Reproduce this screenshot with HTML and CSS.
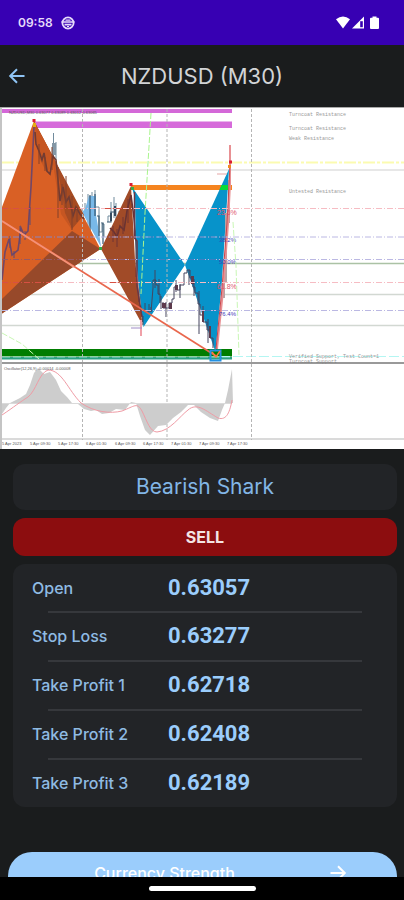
FILE: index.html
```
<!DOCTYPE html>
<html lang="en">
<head>
  <meta charset="UTF-8">
  <meta name="viewport" content="width=device-width, initial-scale=1.0">
  <title>NZDUSD (M30)</title>
  <link rel="stylesheet" href="styles.css">
</head>
<body>
  <div class="status-bar">
    <span class="time">09:58</span>
    <svg class="app-icon" viewBox="0 0 14 14">
      <circle cx="7" cy="7" r="5.6" fill="none" stroke="#e6dcfa" stroke-width="1.8"/>
      <path d="M0.5 6h13M3.5 8.6h7" stroke="#e6dcfa" stroke-width="1.6"/>
      <path d="M4.5 4.2h5M6 10.5h2" stroke="#e6dcfa" stroke-width="1.2"/>
    </svg>
    <svg class="system-icons" viewBox="0 0 44 14">
      <path d="M0 3.2Q7-2.4 14 3.2L7 12.5Z" fill="#fff"/>
      <path d="M28 0.5V12.5H16Z" fill="#fff"/>
      <path d="M24.2 5.2h2.6v6h-2.6Z" fill="#3700b3"/>
      <path d="M36.500 0.500h4v1.300h1.500q1 0 1 1V12q0 1-1 1h-7q-1 0-1-1V2.800q0-1 1-1h1.500Z" fill="#fff"/>
    </svg>
  </div>

  <header class="app-bar">
    <button class="back" aria-label="Back">
      <svg viewBox="0 0 18 18"><path d="M16.500 9H2.500M9 2.200L2.200 9L9 15.800"/></svg>
    </button>
    <h1>NZDUSD (M30)</h1>
  </header>

  <main>
    <svg class="chart" viewBox="0 107 404 342">
      <rect y="107" width="404" height="342" fill="#fff"/>

      <!-- resistance zones -->
      <rect x="2" y="109" width="230" height="4" fill="#d468d8"/>
      <rect x="34" y="121.500" width="198" height="6.500" fill="#d66ada"/>
      <rect x="131" y="185" width="101" height="5" fill="#f5841f"/>
      <text class="tiny dark" x="9" y="113.500">NZDUSD,M30 0.63077 0.63089 0.63012 0.63065</text>

      <!-- price levels -->
      <path d="M2 170H404" stroke="#cfcfcf"/>
      <path d="M2 263.500H404" stroke="#abc2a5" stroke-width="1.300"/>
      <path d="M2 294.500H404M2 325.500H404" stroke="#d2d8d2" stroke-width="1.500"/>
      <path d="M2 162.500H404" stroke="#fbfbb0" stroke-width="2" stroke-dasharray="12 2 3 2"/>

      <!-- supports -->
      <rect x="2" y="349" width="230" height="7.500" fill="#007d00"/>
      <rect x="2" y="357" width="230" height="2.500" fill="#2ba183"/>
      <path d="M2 357H232" stroke="#b6eee0" stroke-width="0.700" stroke-dasharray="8 3"/>
      <path d="M220 356.500H404" stroke="#b4f6f2" stroke-width="1.200" stroke-dasharray="10 3"/>

      <!-- candles behind the patterns -->
      <g fill="none" stroke="#718b9d" stroke-width="1">
        <path d="M53.500 133V170M56 142V160M82 208V222M85 203V215M88 194V236M92 192V206M95 190V230M96 207H99V232H102V224H104V237M108 222V216H111V202M114 197V218M116 203V220M119 211V225"/>
      </g>
      <path d="M82 212L85 209L89 196H96V215L99 232L101 247Z" fill="#78b8e8"/>
      <path d="M90 195V234M95 194V216M97 216H99V236M101 223H103V244M107 222H111V212H115" fill="none" stroke="#35566f" stroke-width="1.200"/>
      <path d="M110 213h2v8h-2ZM114 206h2v10h-2Z" fill="#354b60"/>
      <path d="M52 143h4v12h-4Z" fill="#8397a6"/>

      <!-- left pattern -->
      <path d="M34 121L100.500 249L2 313.500V207Z" fill="#d96025"/>
      <path d="M34 121L84 215L72 229L62 208L54 160L42 160Z" fill="#a64b22"/>
      <path d="M34 121L57 164L65 213L70 224L72 230L61 214L53 164L47 173L39 158Z" fill="#c65622"/>
      <path d="M72 231L100.500 249L2 313.500V299Z" fill="#97492a"/>
      <path d="M131 186L101 249L142.500 325L135 260Z" fill="#a14b28"/>
      <path d="M34 127L31 187L28 231L24 235L21 228L18 250L12 255L9 239L5 252L2 280" fill="none" stroke="#714768" stroke-width="1.600"/>
      <path d="M20 226V244M10 236V248M14 251V258M25 231V240M30 207V225" stroke="#5d4b75"/>
      <path d="M35 132L36 144L39 151L42 160L44 153L47 171L50 174L53 156L56 160L58 180L60 201L63 187L66 202L69 197L73 216L76 207L80 214L84 219" fill="none" stroke="#713b32" stroke-width="1.600"/>
      <path d="M39 144V164M45 157V171M52 147V170M58 167V218M62 184V205M66 176V208M72 196V230M77 207V222" stroke="#82402a"/>
      <path d="M110 228L114 232L117 237L120 226L124 230L127 211L131 195L134 218L137 252L140 286L143 322" fill="none" stroke="#6a3332" stroke-width="1.600"/>
      <path d="M113 226V242M117 229V247M123 217V234M128 199V223M136 230V277M139 261V302" stroke="#713533"/>

      <!-- right pattern -->
      <path d="M131.500 186L185 265L143.500 327L136 260L135 198Z" fill="#0793ca"/>
      <path d="M229 169L185 265L215.500 352L222 280Z" fill="#0793ca"/>
      <path d="M221.500 185H229V190H219.500Z" fill="#08db38"/>
      <path d="M134.500 192V238L137 241V286L142 317" fill="none" stroke="#693746" stroke-width="1.500"/>

      <!-- candles over the patterns -->
      <g fill="none" stroke="#45455f" stroke-width="1">
        <path d="M143 316V325M145 303V312H149V304M151 307V312L153 288V280H156V285H158V294H160V303M161 296V309M163 302V308H169V303H172V299H174V287H177V290H180V285H184V273H187V270H190V278H193V287H195V293H198V304H200V315H203V322H207V330H210V338H213V348"/>
        <path d="M155 270V288M159 279V295M166 302V317M176 280V292M180 284V298M189 270V285M194 279V296M199 291V334M203 306V322M208 319V343"/>
      </g>
      <path d="M162 303h4v5h-4ZM169 303h3v6h-3ZM175 285h3v5h-3ZM191 276h3v8h-3ZM202 310h2v12h-2ZM209 326h2v12h-2Z" fill="#5c3a4c"/>
      <path d="M226 213V282M229 180V223M224 278V298" stroke="#b7a4a5" stroke-width="2"/>
      <path d="M230 145V184L228 224L223 291L217 349" fill="none" stroke="#e89093" stroke-width="2"/>
      <path d="M230 165L227 223L222 288L216 349" fill="none" stroke="#ca474d"/>
      <path d="M141 320V336" stroke="#f0a0a8" stroke-width="2"/>
      <path d="M131 328H142" stroke="#9f8cc6"/>
      <path d="M217 174H227" stroke="#e6a5a5"/>

      <!-- fib levels -->
      <g fill="none" stroke-width="1" stroke-dasharray="6 2 1 2">
        <path d="M2 208.500H404M2 282.500H404" stroke="#f6bcc3"/>
        <path d="M2 237H404M2 259.500H404M2 310.500H404" stroke="#bbb8e3"/>
        <path d="M2 208.500H80M2 282.500H50M105 208.500H122M110 282.500H138" stroke="#d75043"/>
        <path d="M2 237H93M2 259.500H84M108 237H136M108 259.500H136" stroke="#965964"/>
        <path d="M137 237H166M137 259.500H182M198 237H226M188 259.500H224M205 310.500H220" stroke="#3d7fc0"/>
      </g>
      <g class="fib">
        <text class="red" x="217" y="215">23.6%</text>
        <text class="blue" x="219" y="241.500">38.2%</text>
        <text class="blue" x="219" y="264">50.0%</text>
        <text class="red" x="217" y="289">61.8%</text>
        <text class="blue" x="219" y="315.500">76.4%</text>
      </g>

      <path d="M151 113L145 213L141 294" fill="none" stroke="#a9f58d" stroke-dasharray="6 2"/>
      <path d="M233 222L236 266L239 355M2 333L22 344L39 359" fill="none" stroke="#c9f7b5" stroke-dasharray="6 2"/>
      <path d="M82.500 109V440M167 109V440M251.500 109V440" stroke="#b5b5b5" stroke-dasharray="3 2"/>
      <path d="M2 221L216 356" stroke="#e9674d" stroke-width="1.700"/>
      <path d="M2 221L74 267" stroke="#f49277" stroke-width="1.700"/>
      <rect x="210.500" y="350.500" width="10" height="10" fill="none" stroke="#2391e3" stroke-width="2"/>
      <path d="M212 352L216 357L220 351" fill="none" stroke="#ff7741" stroke-width="1.500"/>

      <!-- pivot markers -->
      <path d="M32.500 119h3v3h-3ZM129.500 183h3v3h-3ZM229 160.500h3v3h-3Z" fill="#da1d32"/>
      <path d="M33 123h3v4h-3Z" fill="#e4ae14"/>
      <path d="M131 187h3v3h-3ZM99 247h3v3h-3Z" fill="#38aa46"/>
      <path d="M228 165h3v3h-3Z" fill="#f28a20"/>

      <text class="tiny" x="289" y="116">Turncoat Resistance</text>
      <text class="tiny" x="289" y="130">Turncoat Resistance</text>
      <text class="tiny" x="289" y="140">Weak Resistance</text>
      <text class="tiny" x="289" y="192.500">Untested Resistance</text>
      <text class="tiny" x="289" y="358">Verified Support, Test Count=1</text>
      <text class="tiny" x="289" y="363">Turncoat Support</text>

      <!-- oscillator -->
      <path d="M2 363H404" stroke="#777" stroke-width="1.500"/>
      <path d="M2 403V414L6 408L10 403L20 398L26 394L30 385L34 373L38 368L44 374L50 372L56 380L61 391L67 397L72 403L78 404L84 409L91 411L96 410L102 414L109 413L116 409L125 410L131 402L136 403L140 416L145 430L150 435L158 426L166 425L173 418L181 412L188 405L194 405L201 412L210 418L218 421L222 410L225 403L228 390L232 369L233 403Z" fill="#cdcdcd"/>
      <path d="M2 403.500H232" stroke="#dadada"/>
      <path d="M2 415C14 407 20 402 28 397C36 391 39 373 48 370C62 370 68 390 81 403C94 412 110 414 122 411C135 406 137 402 142 411C147 421 150 432 157 432C170 431 180 416 188 410C197 402 206 411 218 418C227 421 230 411 232 400" fill="none" stroke="#ef9ba5"/>
      <text class="tiny dark" x="4" y="369.500">Oscillator(12,26,9) -0.00014 -0.00008</text>
      <path d="M2 439H404" stroke="#b5b5b5"/>
      <g class="tiny dark">
        <text x="2" y="445">5 Apr 2023</text>
        <text x="30" y="445">5 Apr 09:30</text>
        <text x="58" y="445">5 Apr 17:30</text>
        <text x="86" y="445">6 Apr 01:30</text>
        <text x="115" y="445">6 Apr 09:30</text>
        <text x="143" y="445">6 Apr 17:30</text>
        <text x="171" y="445">7 Apr 01:30</text>
        <text x="199" y="445">7 Apr 09:30</text>
        <text x="227" y="445">7 Apr 17:30</text>
      </g>
      <rect y="107" width="2" height="342" fill="#c4c4c4"/>
      <path d="M0 107.500H404" stroke="#aaa"/>
    </svg>

    <section class="signal">
      <h2 class="pattern">Bearish Shark</h2>
      <div class="side">SELL</div>
      <div class="levels">
        <table>
          <tr><th scope="row">Open</th><td>0.63057</td></tr>
          <tr><th scope="row">Stop Loss</th><td>0.63277</td></tr>
          <tr><th scope="row">Take Profit 1</th><td>0.62718</td></tr>
          <tr><th scope="row">Take Profit 2</th><td>0.62408</td></tr>
          <tr><th scope="row">Take Profit 3</th><td>0.62189</td></tr>
        </table>
      </div>
    </section>

    <button class="strength">
      <span>Currency Strength</span>
      <svg viewBox="0 0 18 18"><path d="M1.500 9H15.500M9 2.200L15.800 9L9 15.800"/></svg>
    </button>
  </main>

  <div class="nav-bar"><div class="handle"></div></div>
</body>
</html>
```
FILE: styles.css
```
:root {
  --bg: #1a1c1d;
  --card: #222427;
  --blue: #9bcdfc;
  --sell: #8c0d0f;
}

* {
  box-sizing: border-box;
}

body {
  margin: 0;
  height: 100vh;
  display: flex;
  flex-direction: column;
  overflow: hidden;
  background: var(--bg);
  color: var(--blue);
  font-family: Inter, Roboto, sans-serif;
}

button {
  border: none;
  padding: 0;
  font-family: inherit;
  cursor: pointer;
}

.status-bar {
  flex: none;
  height: 45px;
  display: flex;
  align-items: center;
  padding: 0 24px 0 18px;
  background: #3700b3;
}

.time {
  color: #e6dcfa;
  font-size: 12px;
  font-weight: 600;
}

.app-icon {
  width: 14px;
  height: 14px;
  margin-left: 8px;
}

.system-icons {
  width: 44px;
  height: 14px;
  margin-left: auto;
}

.app-bar {
  flex: none;
  height: 62px;
  display: grid;
  grid-template-columns: 34px 1fr 34px;
  align-items: center;
}

.back {
  height: 40px;
  padding-left: 8px;
  background: none;
}

.back svg {
  display: block;
  width: 18px;
  height: 18px;
}

.back path,
.strength path {
  fill: none;
  stroke: #8fc4f4;
  stroke-width: 2;
}

h1 {
  margin: 0;
  color: #d2d4d6;
  font-size: 22px;
  font-weight: 400;
  text-align: center;
}

main {
  flex: 1;
  min-height: 0;
  overflow: hidden;
}

.chart {
  display: block;
  width: 100%;
  height: auto;
}

.tiny {
  fill: #999;
  font-family: "Liberation Mono", monospace;
  font-size: 5px;
}

.dark {
  fill: #555;
  font-family: "Liberation Sans", sans-serif;
  font-size: 4px;
}

.fib {
  font-family: "Liberation Sans", sans-serif;
  font-size: 6px;
}

.red {
  fill: #e0546b;
  font-size: 7px;
}

.blue {
  fill: #4740b8;
}

.signal {
  display: flex;
  flex-direction: column;
  gap: 8px;
  padding: 15px 7px 0 13px;
}

.pattern,
.side,
.levels {
  border-radius: 12px;
  background: var(--card);
}

.pattern {
  margin: 0;
  color: #82b6e6;
  font-size: 21px;
  font-weight: 400;
  line-height: 46px;
  text-align: center;
}

.side {
  background: var(--sell);
  color: #f4e4e4;
  font-size: 16px;
  font-weight: 700;
  line-height: 38px;
  text-align: center;
}

table {
  width: 100%;
  border-collapse: collapse;
}

tr + tr {
  background: linear-gradient(#36383c, #36383c) no-repeat top center / calc(100% - 70px) 2px;
}

th,
td {
  height: 49px;
  padding: 0;
  text-align: left;
}

tr:first-child > * {
  height: 47px;
}

th {
  width: 155px;
  padding-left: 19px;
  color: #8fbbe3;
  font-size: 16px;
  font-weight: 500;
}

td {
  font-family: Roboto, sans-serif;
  font-size: 22px;
  font-weight: 700;
}

.strength {
  display: flex;
  align-items: center;
  gap: 8px;
  width: calc(100% - 15px);
  height: 42px;
  margin: 45px 7px 0 8px;
  padding-right: 50px;
  border-radius: 24px 24px 16px 16px;
  background: var(--blue);
  color: #fff;
  font-size: 16px;
  font-weight: 500;
}

.strength span {
  flex: 1;
}

.strength svg {
  width: 18px;
  height: 18px;
}

.strength path {
  stroke: #fff;
}

.nav-bar {
  flex: none;
  height: 23px;
  display: flex;
  justify-content: center;
  align-items: center;
  background: #000;
}

.handle {
  width: 107px;
  height: 5px;
  border-radius: 3px;
  background: #fff;
}
```
